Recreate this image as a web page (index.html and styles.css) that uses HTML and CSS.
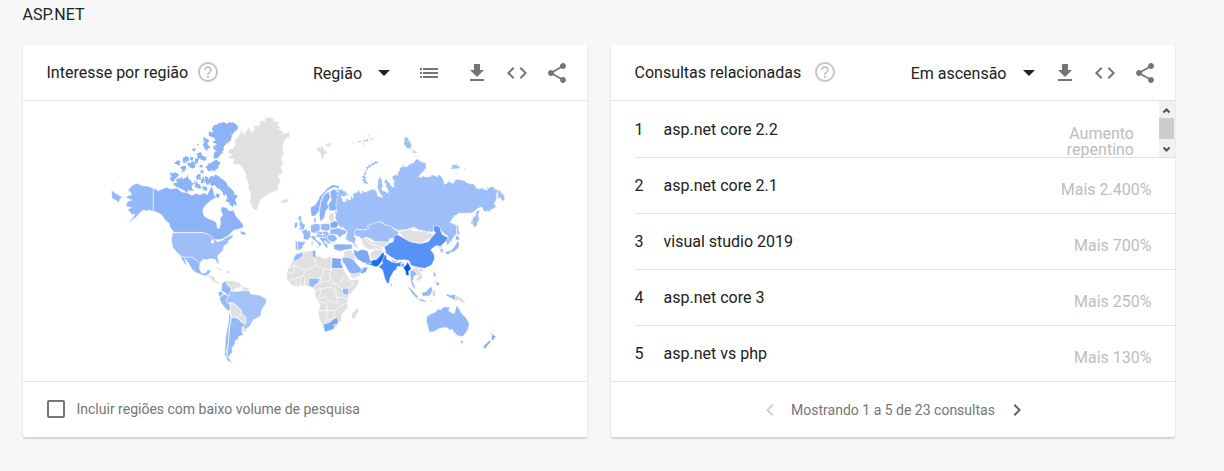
FILE: index.html
```html
<!DOCTYPE html>
<html lang="pt-BR">
<head>
<meta charset="utf-8">
<title>ASP.NET</title>
<link rel="stylesheet" href="styles.css">
</head>
<body>
<svg class="defs" width="0" height="0">
  <defs>
    <symbol id="help" viewBox="0 0 24 24"><path d="M11 18h2v-2h-2v2zm1-16C6.48 2 2 6.48 2 12s4.480 10 10 10 10-4.480 10-10S17.520 2 12 2zm0 18c-4.410 0-8-3.590-8-8s3.590-8 8-8 8 3.590 8 8-3.590 8-8 8zm0-14c-2.210 0-4 1.790-4 4h2c0-1.100.9-2 2-2s2 .9 2 2c0 2-3 1.750-3 5h2c0-2.250 3-2.500 3-5 0-2.210-1.790-4-4-4z"/></symbol>
    <symbol id="download" viewBox="0 0 24 24"><path d="M19 9h-4V3H9v6H5l7 7 7-7zM5 18v2h14v-2H5z"/></symbol>
    <symbol id="code" viewBox="0 0 24 24"><path d="M9.400 16.600L4.800 12l4.600-4.600L8 6l-6 6 6 6 1.400-1.400zm5.200 0l4.600-4.600-4.600-4.600L16 6l6 6-6 6-1.400-1.400z"/></symbol>
    <symbol id="share" viewBox="0 0 24 24"><path d="M18 16.080c-.76 0-1.440.3-1.960.77L8.910 12.700c.05-.23.090-.46.090-.7s-.04-.47-.09-.7l7.050-4.110c.54.5 1.250.81 2.040.81 1.660 0 3-1.340 3-3s-1.340-3-3-3-3 1.340-3 3c0 .24.040.47.090.7L8.040 9.810C7.500 9.310 6.790 9 6 9c-1.660 0-3 1.340-3 3s1.340 3 3 3c.79 0 1.500-.31 2.040-.81l7.120 4.160c-.05.21-.08.43-.08.65 0 1.610 1.310 2.920 2.920 2.920s2.920-1.310 2.920-2.920-1.310-2.920-2.920-2.920z"/></symbol>
    <symbol id="list" viewBox="0 0 24 24"><path d="M3 7h2v2H3zM3 11h2v2H3zM3 15h2v2H3zM6 7h15v2H6zM6 11h15v2H6zM6 15h15v2H6z"/></symbol>
    <symbol id="left" viewBox="0 0 24 24"><path d="M15.410 7.410L14 6l-6 6 6 6 1.410-1.410L10.830 12z"/></symbol>
    <symbol id="right" viewBox="0 0 24 24"><path d="M10 6L8.590 7.410 13.170 12l-4.580 4.590L10 18l6-6z"/></symbol>
    <filter id="coast" x="-5%" y="-5%" width="110%" height="110%" color-interpolation-filters="sRGB">
      <feTurbulence type="fractalNoise" baseFrequency=".12" numOctaves="2" seed="4" result="n"/>
      <feDisplacementMap in="SourceGraphic" in2="n" scale="9" xChannelSelector="R" yChannelSelector="G"/>
    </filter>
  </defs>
</svg>
<main class="page">
  <h1 class="term">ASP.NET</h1>
  <div class="cards">
    <section class="card">
      <header class="head">
        <h2 class="title">Interesse por região</h2>
        <svg class="help"><use href="#help"/></svg>
        <div class="tools">
          <button class="select">Região<i class="caret"></i></button>
          <svg class="icon list"><use href="#list"/></svg>
          <svg class="icon"><use href="#download"/></svg>
          <svg class="icon"><use href="#code"/></svg>
          <svg class="icon share"><use href="#share"/></svg>
        </div>
      </header>
      <div class="map">
        <svg class="world" viewBox="23 101 564 280">
          <!-- North America, north -->
          <g class="land" transform="translate(100 110) scale(.33333)">
            <path class="b2" d="M112 220L125 227 140 228 160 234V305L148 300 140 303 128 301 120 308 112 318 102 327 90 335 80 342 100 322 104 312 95 315 90 306 82 300 95 292 80 290 78 285 82 275 95 270 80 264 80 258 95 254 90 245 83 240 92 232 98 225zM36 215L40 218 38 222zM34 240L46 250 56 255 66 262 60 268 56 278 46 270 36 265zM68 258l4 3-3 4z"/>
            <path class="b3" d="M160 234L175 242 190 236 200 232 212 237 230 234 245 246 262 248 275 256 290 250 300 255 312 248 322 254 328 240 336 228 342 248 346 264 335 270 325 278 315 288 308 300 312 318 325 326 342 332 350 340 352 355 358 355 362 340 360 325 368 315 362 300 366 290 380 293 388 303 400 300 408 318 418 330 430 345 430 352 415 358 402 360 388 374 376 382 366 388 335 390 325 373 308 367H222L210 352 207 340 195 330 185 315 172 307 160 303zM420 362L434 366 440 374 424 375z"/>
            <g class="islands" filter="url(#coast)">
            <path class="b3" d="M318 195L326 205 335 196 342 202 345 194 356 199 365 208 378 215 385 230 398 240 405 252 411 262 405 270 412 288 400 285 396 294 388 278 375 272 384 264 370 250 362 240 352 235 345 225 336 228 330 222 320 224 312 208z"/>
            <path class="b3" d="M228 210L245 202 250 208 262 198 270 212 282 218 275 230 282 243 265 240 262 248 250 240 240 235 228 230 218 222 232 218zM215 186L230 188 238 195 228 205 218 215 210 210zM335 50L350 42 370 37 382 40 400 37 415 50 406 62 396 75 394 90 380 100 370 112 372 118 362 132 358 142 345 147 338 137 350 124 338 112 352 102 338 98 347 86 330 78 322 68 338 66zM308 80L318 84 328 92 322 100 328 110 320 124 308 105 314 95zM315 170L330 160 348 150 360 155 355 175 345 181 325 184zM290 130l12-4 5 12 14 4-4 10-14-3-12-8zM248 145l12-8 8 8-4 12-14 2zM222 160l12-10 8 6-8 10zM240 172l16-6 4 12-12 8zM262 160l18-6 8 8-6 14-16-4zM287 195l14-4 2 16-12 6zM294 222l8 2 0 14-10-4zM276 118l6-4 5 7-6 4zM290 100l6 3-2 6zM303 180l10 2 0 10-12-2zM318 258l8 10-12 2zM350 250l10 4-3 10-10-4zM300 164l8 1-1 9-7-3zM286 142l10 6-4 14-8-4zM272 140l8 2-2 10-8-2zM283 212l10 6 3 18-10-4zM306 200l8 8-4 14-8-6zM308 226l12 4-2 14-10-4z"/>
            </g>
          </g>
          <!-- Greenland, Iceland, Svalbard, Scandinavia, British Isles -->
          <g class="land" transform="translate(220 110) scale(.33333)">
            <path class="g" filter="url(#coast)" d="M150 22L165 26 160 33 178 38 172 45 182 52 170 58 190 62 186 74 200 68 212 68 208 80 195 88 188 110 192 130 184 145 192 160 182 170 188 185 175 200 182 215 172 230 178 236 165 245 148 250 135 262 122 268 115 290 108 302 98 295 90 275 93 255 86 240 86 220 76 205 76 188 68 175 60 165 35 160 44 150 22 142 36 134 20 127 35 115 47 103 42 90 55 80 64 58 72 75 86 50 94 68 104 60 102 44 112 48 120 42 122 30 135 35 136 22zM180 268l8 4 4-6 8 0 5-3 4 8-8 6-8 5-10-4zM290 108l10 5 5-8 6 10 14 14-10 2-6 20-5-8-5-17-8-8zM313 102l22-4 4 8-16 5z"/>
            <path class="b3" d="M272 305V292L286 284 292 274 300 258 312 246 322 234 338 224 358 228 356 236 342 232 325 240 310 255 302 275 298 303 285 318 274 318zM298 305L302 278 312 255 326 244 331 262 322 278 326 292 318 302 312 325 302 335 298 320zM330 245L340 238 350 240 356 262 360 285 345 302 328 302 324 285 334 270z"/>
            <path class="g" d="M328 312L342 308 342 335 332 340 326 325z"/>
            <path class="b2" d="M236 318L244 318 244 330 248 340 256 346 252 358 236 361 242 350 237 344 240 334 235 328zM224 338L234 336 232 352 222 354zM282 325l6-2 0 14-7 0z"/>
          </g>
          <!-- Russia and Kazakhstan -->
          <g class="land" transform="translate(320 130) scale(.33333)">
            <path class="b1" filter="url(#coast)" d="M52 178L62 178 80 186 84 196 70 200 62 196 68 210 76 216 80 206 90 210 94 202 100 205 98 192 112 186 116 178 120 188 135 185 158 178 168 182 176 200 188 202 172 178 174 150 180 142 186 150 188 170 186 182 196 184 208 192 202 176 192 156 198 146 206 156 214 168 222 172 220 152 214 138 232 134 238 118 246 108 262 110 268 102 280 98 292 84 302 96 318 98 318 116 300 134 294 142 312 140 330 140 335 134 345 138 360 134 370 148 372 160 380 160 385 154 402 158 408 148 430 150 440 158 465 164 470 178 480 174 490 178 502 180 505 172 516 170 530 178V208L522 222 530 230 512 240 505 245 492 244 486 232 475 234 458 248 438 250 415 250 400 262 390 278 408 285 412 305 396 330 383 345 376 332 384 318 370 310 355 290 342 288 338 305 320 305 300 300 280 292 262 298 240 302 225 298 212 288 195 285 178 275 160 282 142 288 148 296 128 300 108 296 104 310 108 325 104 342 82 332 78 320 82 306 72 296 60 290 50 280 45 262 50 240 48 230 50 215 52 195zM533 178L545 186 554 200V214L544 210 540 202 533 208zM482 236L475 255 478 268 464 294 456 280 458 262 466 258 470 246zM172 94L176 98 155 108 142 120 136 138 138 152 148 163 130 160 126 148 132 130 140 112 155 100zM252 28l6-8 7 2 2 14 8 9-3 15-10-6-9-9zM278 58l12 8-10 7zM395 105l12-1 12 4-4 8-20 1zM430 114l8 2-4 4zM406 132l7 1-3 4zM534 156l7 3-5 3zM414 278l4 30-6 12-3-18zM98 40l6-2 3 3-6 2zM112 32l10-3 2 8-9 0zM128 28l8 2 8-4 3 6-14 4zM143 14l8-2-2 6zM152 24l8 0-4 6zM126 42l5-3 3 5zM147 38l5-2 0 5z"/>
            <path class="b1" d="M106 298L128 300 148 296 142 288 160 280 178 275 195 285 212 288 225 300 238 306 225 325 208 326 206 338 180 335 165 335 150 325 136 322 130 337 118 320 108 318 102 308z"/>
          </g>
          <!-- East Asia and Oceania -->
          <g class="land" transform="translate(370 215) scale(.33333)">
            <path class="g" d="M88 50L105 45 122 42 130 48 160 48 190 56 188 66 165 78 150 86 120 80 98 66zM204 88L217 86 218 98 208 102zM126 160L142 156 152 172 156 188 146 200 137 192 146 184 132 172zM255 240L275 248 280 256 289 266 278 264 265 256 255 258zM284 248l8-4-2 6z"/>
            <path class="c" d="M80 58L72 68 70 80 42 90 48 115 62 125 80 136 105 134 118 138 122 150 135 155 150 158 165 160 185 150 194 132 192 118 182 104 198 92 212 94 226 80 234 68 216 58 208 34 192 32 190 46 197 54 186 66 175 80 150 86 120 80 95 66zM150 163l7 0-2 6-5-1z"/>
            <path class="i" d="M40 118L50 122 50 132 64 140 80 144 96 140 92 155 82 154 80 162 70 170 60 190 58 202 52 207 44 190 38 165 26 156 38 145 34 132zM62 204l5 7-5 3z"/>
            <path class="p" d="M-12 133L4 138 20 130 32 115 42 112 42 125 36 138 26 152 18 156 2 150 -12 148z"/>
            <path class="b3" d="M90 146L103 144 105 158 96 156zM64 134l18 5-2 5-16-5z"/>
            <path class="m" d="M113 140L118 150 124 162 116 168 117 182 108 180 106 168 100 158 108 150z"/>
            <path class="b2" d="M120 168L130 165 142 178 132 184 130 194 126 196 134 212 138 222 128 216 122 200zM111 214L122 220 132 232 144 244 142 252 128 238zM143 251L155 252 168 257 168 262 146 256zM153 233L168 230 174 222 184 214 188 226 180 242 160 244zM187 230L200 226 192 234 198 246 190 242zM190 170L198 174 197 186 192 186zM194 194l4 4-3 5zM205 198l4 12-8 2-4-6zM228 236L240 240 256 238 256 258 242 248 230 244zM196 152l2 6-3 3zM174 256l14 0-2 4zM152 174l4 14-9 12 4-12zM210 101L218 100 220 112 212 112z"/>
            <path class="b2" d="M258 60L270 68 268 74 256 76zM262 78L268 82 266 98 252 110 242 112 236 118 226 118 228 110 244 106 254 94z"/>
            <path class="b2" d="M170 305L180 298 195 292 205 282 212 284 222 275 240 276 236 288 252 296 256 285 260 270 268 282 275 295 288 308 298 325 295 342 286 356 278 365 262 362 252 352 246 342 240 346 232 338 218 338 205 342 192 350 178 352 174 336 169 320zM269 377L281 378 276 388z"/>
            <path class="d" d="M361 350L370 360 378 364 368 377 364 374 366 362zM358 376L363 380 352 392 346 402 339 396z"/>
          </g>
          <!-- Africa, Middle East and Europe -->
          <g class="land" transform="translate(280 210) scale(.33333)">
            <path class="g" d="M42 140L50 130 66 126 80 124 100 121 108 124 108 136 125 142 136 146 145 140 158 144 185 146 184 158 192 180 200 195 212 210 238 208 236 220 222 240 205 258 202 278 204 292 186 312 184 330 168 352 150 364 132 366 128 350 118 325 114 306 120 288 112 268 104 258 106 242 98 232 86 230 75 226 60 228 42 231 30 220 20 206 22 180 36 155zM232 290L236 302 224 328 214 328 216 308 226 300zM192 124L214 120 228 142 222 150 206 142 192 142zM210 192L238 188 242 196 218 206zM243 86L258 84 280 96 300 96 322 96 325 104 308 112 300 120 285 118 265 118 250 108zM272 128L285 120 305 116 308 126 298 140 288 150 272 146zM216 100l14 0 6 16-14-4z"/>
            <path class="line" d="M22 178L42 165 75 180 98 175 108 165 103 145M42 156L72 138M108 165L128 175 154 180V143M154 175L192 175M75 180L70 198 48 205 48 230M88 205L122 205 130 190 128 175M22 190H42L42 165M30 210L48 205M62 204V228M74 200V226M104 226L122 218 122 205M122 218L146 212 150 222 168 222 150 205 148 190 154 180M168 222L184 235 206 235 222 222 200 210M192 195L180 220M108 240L124 236 118 264 112 268M124 236L150 232 168 240 168 262 175 278 165 280 160 275 142 272 138 260 118 264M118 275L140 278 142 300 114 304M142 300L165 302 178 290 202 278M142 300L140 318 148 330 162 324 165 302M130 340L138 340 138 318M168 262L188 262 202 270M258 90L292 118M274 100L306 112"/>
            <path class="b2" d="M48 133L66 127 70 138 55 148 40 156 42 142zM88 205L120 205 115 220 105 224 98 233 86 226zM187 235L206 235 204 258 188 250z"/>
            <path class="d" d="M99 121L108 124 105 132 108 138 102 145 97 132zM156 143L186 146 182 156 190 175H155zM130 342L148 338 160 328 172 322 175 336 160 358 134 366zM220 118L232 124 246 118 262 122 268 138 274 162 250 158 232 148 222 132z"/>
            <path class="b3" d="M186 142L206 142 222 150 232 164 242 174 248 180 240 188 215 192 206 185 195 165 188 156zM160 104L172 102 215 103 218 116 195 120 180 124 162 118z"/>
            <path class="d" d="M248 172L264 172 258 186 245 192 240 186 248 180z"/>
            <path class="b2" d="M64 62L78 58 92 64 92 84 82 90 70 88 70 74zM46 93L78 96 70 106 66 116 54 122 46 116zM92 46L108 40 120 43 120 60 108 72 92 66zM121 42L148 40 152 56 140 64 122 59zM150 57L175 54 200 62 198 72 186 76 180 84 172 74 150 72zM106 66L140 64 150 72 138 82 120 82 106 80zM145 74L165 74 172 88 160 97 148 93 138 82zM116 82L138 82 150 96 158 100 142 102 144 116 136 110 128 98zM90 78L108 78 106 86 122 98 125 104 118 110 112 98 98 88zM106 110l10 0-2 5zM94 95l5 0-1 12-4-2z"/>
            <path class="g" d="M132 92l8 2 2 8-6-1z"/>
            <path class="d" d="M150 40L165 32 176 42 170 54 152 54z"/>
            <path class="line" d="M52 94L54 120M82 60L84 68M108 66L110 78M128 64V80M104 72L138 74"/>
            <circle class="g" cx="164" cy="346" r="4"/>
          </g>
          <!-- Central and South America, contiguous US -->
          <g class="land" transform="translate(160 220) scale(.33333)">
            <path class="b1" d="M38 38H128L145 42 150 48 158 50 153 68 160 70 163 56 172 66 188 60 202 50 220 44 218 52 205 62 206 68 192 78 190 90 172 108 177 128 172 132 166 118 150 116 140 120 132 118 122 125 120 132 105 118 95 112 75 112 62 108 52 98 38 82 34 60z"/>
            <path class="b2" d="M60 107L75 112 95 112 105 118 120 130 118 145 124 158 136 160 142 150 153 150 148 162 138 168 130 166 108 158 95 147 85 128 73 115 78 126 82 140 72 128 66 118z"/>
            <path class="g" d="M142 163L158 168 165 172 165 182 178 188 176 193 160 186 148 172zM198 182L218 182 240 188 246 200 225 206 222 216 214 204 202 194zM246 200L268 204 266 212 248 212zM210 252L220 250 232 258 244 270 246 282 258 292 258 308 248 310 240 298 230 292 215 292 211 270zM248 320L262 328 256 337 246 332zM160 142l12 0 12 6 8 5-8 0-14-8zM242 408l6 2-5 3z"/>
            <path class="b2" d="M186 190L198 182 202 196 214 204 212 218 205 228 195 218 184 212zM174 217L186 214 190 222 178 232zM178 234L192 222 208 228 198 240 210 255 211 272 200 270 184 250zM200 154l8 0 3 3-9 2z"/>
            <path class="b0" d="M212 212L225 215 246 212 268 212 272 222 300 226 320 238 318 250 306 268 302 288 280 300 270 318 258 328 248 320 258 308 258 292 246 282 244 270 232 258 218 248 200 248 198 238 208 226z"/>
            <path class="b2" d="M214 292L232 294 246 308 256 310 246 322 246 335 250 345 235 350 235 358 225 362 225 372 215 385 218 395 208 408 214 412 200 410 205 370 208 330zM208 274L213 292 207 330 205 370 199 395 205 412 216 428 204 424 194 404 197 350 205 310zM10 25l4 4-2 6z"/>
            <path class="line" d="M230 292L246 282"/>
          </g>
        </svg>
      </div>
      <footer class="foot option">
        <span class="box"></span>
        <span>Incluir regiões com baixo volume de pesquisa</span>
      </footer>
    </section>
    <section class="card">
      <header class="head">
        <h2 class="title">Consultas relacionadas</h2>
        <svg class="help wide"><use href="#help"/></svg>
        <div class="tools">
          <button class="select">Em ascensão<i class="caret"></i></button>
          <svg class="icon near"><use href="#download"/></svg>
          <svg class="icon"><use href="#code"/></svg>
          <svg class="icon share"><use href="#share"/></svg>
        </div>
      </header>
      <ol class="rows">
        <li class="row"><span class="num">1</span><span class="query">asp.net core 2.2</span><span class="value rising"><span>Aumento</span> <span>repentino</span></span>
          <span class="scroll">
            <svg viewBox="0 0 16 56"><path class="thumb" d="M0 17h15v21H0z"/><path class="arrow" d="M4.500 11.500L7.500 8.500l3 3M4.500 46.500l3 3 3-3"/></svg>
          </span></li>
        <li class="row"><span class="num">2</span><span class="query">asp.net core 2.1</span><span class="value">Mais 2.400%</span></li>
        <li class="row"><span class="num">3</span><span class="query">visual studio 2019</span><span class="value">Mais 700%</span></li>
        <li class="row"><span class="num">4</span><span class="query">asp.net core 3</span><span class="value">Mais 250%</span></li>
        <li class="row"><span class="num">5</span><span class="query">asp.net vs php</span><span class="value">Mais 130%</span></li>
      </ol>
      <footer class="foot pager">
        <svg class="nav off"><use href="#left"/></svg>
        <span>Mostrando 1 a 5 de 23 consultas</span>
        <svg class="nav"><use href="#right"/></svg>
      </footer>
    </section>
  </div>
</main>
</body>
</html>
```
FILE: styles.css
```css
* { box-sizing: border-box; }
body { margin: 0; background: #f7f7f7; color: #212121; font: 16px/24px Roboto, sans-serif; }
.defs { display: block; height: 0; }
.page { height: 471px; padding: 3px 49px 0 23px; overflow: hidden; }
.term { margin: 0 0 18px -0.5px; font-size: 16px; font-weight: 400; line-height: 24px; }
.cards { display: grid; grid-template-columns: 564px 564px; gap: 24px; }
.card { height: 392px; background: #fff; border-radius: 2px; box-shadow: 0 2px 2px rgba(0,0,0,.1), 0 1px 2px rgba(0,0,0,.1); overflow: hidden; }
.head { display: flex; align-items: center; height: 56px; padding: 0 18.500px 0 23.500px; border-bottom: 1px solid #e0e0e0; }
.title { margin: 0; font-size: 16px; font-weight: 400; }
.help { width: 24px; height: 24px; margin: -1px 0 0 7.500px; fill: #c8c8c8; }
.help.wide { margin-left: 11.500px; }
.tools { display: flex; align-items: center; margin-left: auto; }
.select { display: flex; align-items: center; padding: 2px 0 0; border: 0; background: none; color: #212121; font: inherit; }
.caret { margin: -1px 0 0 16px; border: 6px solid transparent; border-top: 6px solid #212121; border-bottom: 0; }
.icon { width: 24px; height: 24px; margin-left: 16px; fill: #757575; }
.icon.list { margin: 0 7.500px 0 27px; }
.icon.near { margin-left: 18px; }
.map { height: 280px; }
.world { display: block; width: 564px; height: 280px; }
.land path { stroke: #fff; stroke-width: 1.500; stroke-linejoin: round; }
.land .islands path { stroke: none; }
.land .b0 { fill: #a3c3f9; }
.land .b1 { fill: #9dbef8; }
.land .b2 { fill: #95b9f8; }
.land .b3 { fill: #8cb3f8; }
.land .d { fill: #7ba8f7; }
.land .c { fill: #5793f4; }
.land .i { fill: #4385f3; }
.land .p { fill: #1d6bf0; }
.land .m { fill: #0357e9; }
.land .g { fill: #e0e0e0; }
.land .line { fill: none; stroke-width: 2.200; }
.foot { display: flex; align-items: center; height: 56px; padding: 0 24px; border-top: 1px solid #e0e0e0; color: #757575; font-size: 14px; }
.option { padding-bottom: 2px; }
.box { width: 18px; height: 18px; margin-right: 11.500px; border: 2px solid #757575; border-radius: 2px; }
.rows { margin: 0; padding: 0 0 0 24px; list-style: none; }
.row { display: flex; height: 56px; padding-right: 23.500px; border-bottom: 1px solid #e0e0e0; line-height: 56px; }
.row:first-child { height: 57px; padding-right: 0; line-height: 58px; }
.row:last-child { height: 55px; border: 0; }
.num { width: 29px; margin-left: -0.5px; }
.value { margin-left: auto; padding-top: 4px; color: #bdbdbd; }
.row .rising { display: grid; grid-auto-rows: 16px; height: 56px; padding-top: 25px; line-height: 16px; text-align: right; }
.scroll { width: 16px; height: 56px; margin-left: 25px; background: #f1f1f1; }
.scroll svg { display: block; width: 16px; height: 56px; }
.thumb { fill: #cdcdcd; }
.arrow { fill: none; stroke: #505050; stroke-width: 2; }
.pager { justify-content: center; }
.nav { width: 24px; height: 24px; margin: 1px 9.500px 0 10px; fill: #616161; }
.off { fill: #d0d0d0; }
```
